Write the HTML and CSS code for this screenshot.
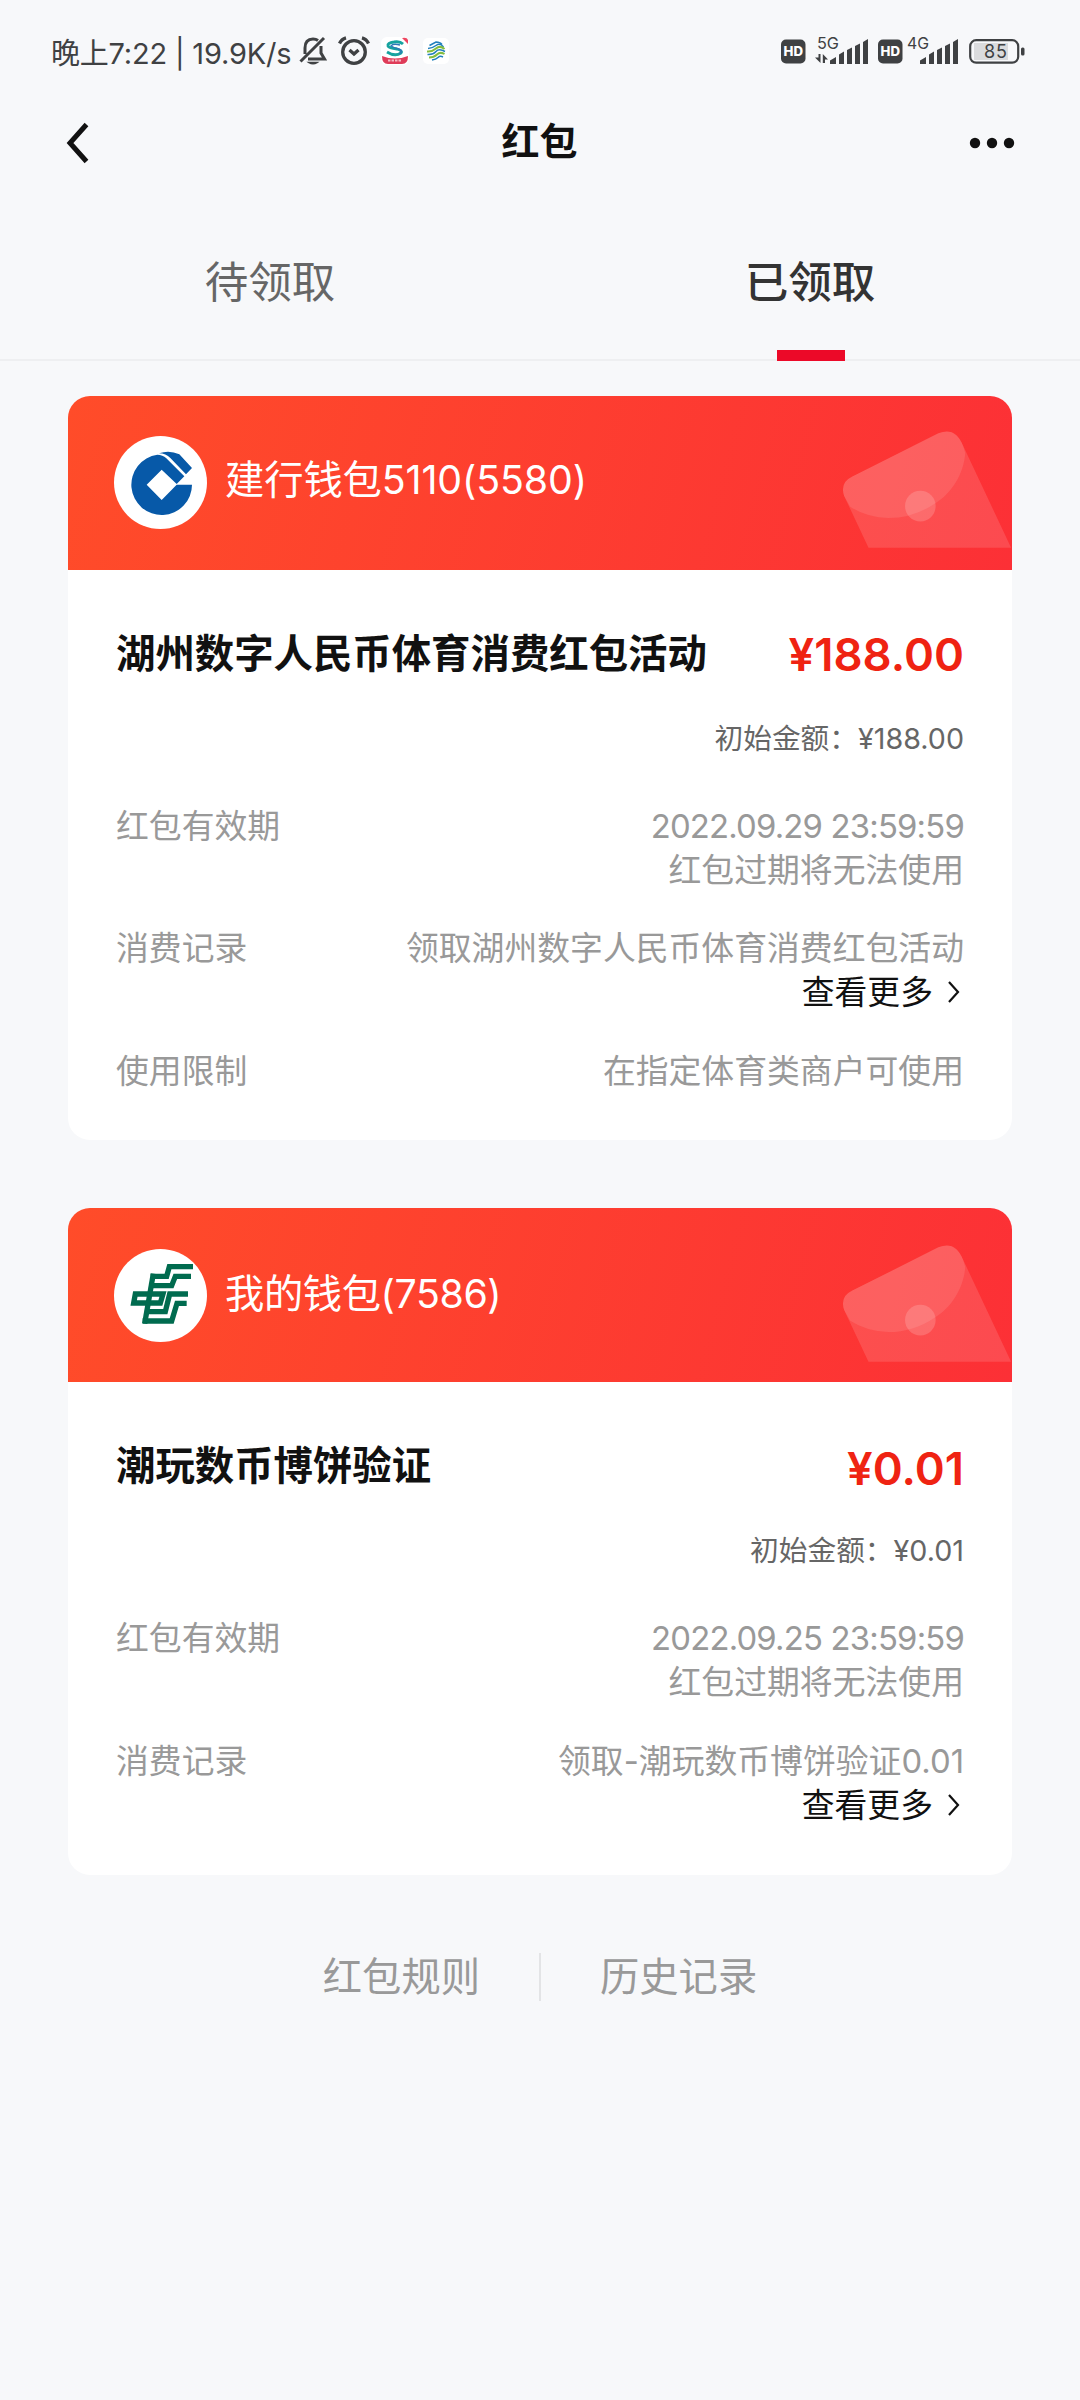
FILE: index.html
```html
<!DOCTYPE html>
<html lang="zh-CN">
<head>
<meta charset="utf-8">
<title>红包</title>
<link rel="stylesheet" href="styles.css">
</head>
<body>
<svg class="defs" width="0" height="0" aria-hidden="true">
  <symbol id="envelope" viewBox="120 110 516 370">
    <path d="M205 473 132 318Q118 278 155 260L415 129Q466 108 489 165L634 473Z" fill="#fff" fill-opacity=".13"/>
    <path d="M150 350 132 318Q118 278 155 260L415 129Q466 108 489 165L496 188C492 250 455 310 405 340Q340 384 265 384 200 382 150 350Z" fill="#fff" fill-opacity=".1"/>
    <circle cx="361" cy="348" r="46" fill="#fff" fill-opacity=".17"/>
  </symbol>
  <symbol id="chevron" viewBox="0 0 14 24"><path d="M2 2 11 12 2 22" fill="none" stroke="#111" stroke-width="2.200"/></symbol>
</svg>

<header class="status">
  <div class="status-left">
    <span class="clock">晚上7:22 | 19.9K/s</span>
    <svg class="i-bell" width="28" height="30" viewBox="0 0 28 30" fill="none" stroke="#3f4143" stroke-width="3">
      <path d="M1.500 25.500 25 2M6 18V12Q6 3 14 3 17 3 19 4.500M22 10V17L25.500 23H9"/><path d="M10 26.500Q14 29 18 26.500Z" fill="#3f4143" stroke-width="1.500"/>
    </svg>
    <svg class="i-alarm" width="32" height="30" viewBox="0 0 32 30" fill="none" stroke="#3f4143" stroke-width="3.300">
      <circle cx="16" cy="16" r="11.300"/><path d="M1.500 7.500Q3.500 3 8 1.800M30.500 7.500Q28.500 3 24 1.800M11.500 14 16 18 20.500 14"/>
    </svg>
    <svg class="i-app" width="28" height="28" viewBox="0 0 28 28">
      <rect width="28" height="28" rx="6" fill="#fff"/>
      <path d="M22 7Q19 4 13 5 6 6 7 9 8 11 16 12 22 14 20 16 14 20 6 15" fill="none" stroke="#16a39f" stroke-width="2.800"/>
      <path d="M19 8Q12 6 10 9 13 11 18 12 23 14 18 17" fill="none" stroke="#2f78b8" stroke-width="1.400"/>
      <path d="M21 1 27 7V3Q26 0 21 1Z" fill="#ee4560"/>
      <path d="M1 19Q14 24 27 19 27 27 21 27H7Q1 27 1 19Z" fill="#df3c59"/>
      <path d="M7 23.500H21" stroke="#fff" stroke-width="2" stroke-dasharray="2.500 1" opacity=".65"/>
    </svg>
    <svg class="i-app2" width="26" height="26" viewBox="0 0 26 26">
      <rect width="26" height="26" rx="5" fill="#fff"/>
      <g fill="none" stroke-width="1.500" stroke="#2180bd"><path d="M6.500 7.500 13 4Q17 4 19 6.500"/><path d="M5 10.500Q9 10.500 13 7.500T20.500 9"/><path d="M4 13.500Q9 14 13 10.500T21.500 11" stroke="#83bd3f" stroke-width="2"/><path d="M4.500 16.500Q10 17 13 13.500T22 13.500"/><path d="M6 19.500Q11 19.500 14 16.500T21.500 16" stroke="#83bd3f" stroke-width="2"/><path d="M9 22Q13 21.500 15 19.500T20 19"/></g>
    </svg>
  </div>
  <svg class="status-right" width="246" height="34" viewBox="780 34 246 34">
    <g fill="#3f4143">
      <rect x="781" y="39.500" width="24.500" height="24" rx="5"/>
      <rect x="878" y="39.500" width="24.500" height="24" rx="5"/>
      <path d="M830 64V60.500L836 57V64ZM839 64V54.500L844 51.500V64ZM847 64V50L852 47.500V64ZM855 64V46L860 43.500V64ZM863 64V42L868 39V64Z"/>
      <path d="M920 64V60.500L926 57V64ZM929 64V54.500L934 51.500V64ZM937 64V50L942 47.500V64ZM945 64V46L950 43.500V64ZM953 64V42L958 39V64Z"/>
      <path d="M820.500 54V63L815 57.500H818.500V54ZM822.800 63V54L828 59.500H825V63Z"/>
      <rect x="1021" y="47.500" width="3.500" height="8" rx="1.500"/>
    </g>
    <g fill="#fff" class="hd"><text x="783.600" y="56" textLength="19.500" lengthAdjust="spacingAndGlyphs">HD</text><text x="880.600" y="56" textLength="19.500" lengthAdjust="spacingAndGlyphs">HD</text></g>
    <g fill="#3f4143" class="net"><text x="817" y="48.800" textLength="22" lengthAdjust="spacingAndGlyphs">5G</text><text x="907" y="48.800" textLength="22" lengthAdjust="spacingAndGlyphs">4G</text></g>
    <rect x="974" y="43" width="34" height="17" fill="#dadbdd"/>
    <rect x="970.200" y="40.200" width="48" height="22.500" rx="6" fill="none" stroke="#3f4143" stroke-width="2.200"/>
    <text class="batt" x="984" y="58" fill="#3f4143" textLength="23">85</text>
  </svg>
</header>

<nav class="nav">
  <svg width="26" height="42" viewBox="0 0 26 42"><path d="M22.500 2.500 6 21 22.500 39.500" fill="none" stroke="#111" stroke-width="5"/></svg>
  <h1>红包</h1>
  <svg width="46" height="12" viewBox="0 0 46 12" fill="#111"><circle cx="6" cy="6" r="5.200"/><circle cx="23" cy="6" r="5.200"/><circle cx="40" cy="6" r="5.200"/></svg>
</nav>

<div class="tabs">
  <div class="tab">待领取</div>
  <div class="tab active">已领取</div>
</div>

<main>
  <section class="card">
    <div class="head">
      <svg class="logo" width="93" height="93" viewBox="42 46 279 279">
        <circle cx="181.500" cy="185.500" r="139.500" fill="#fff"/>
        <g fill="#0759a8"><path d="M276 192A91 91 0 1 1 172 102Q188 102 199 113L253 167 230 190 185 147 140 192 185 238 230 192Z"/><path d="M177 98Q208 87 238 101L276 142 258 161 211 112Q198 98 177 98Z"/></g>
      </svg>
      <span class="wallet">建行钱包5110(5580)</span>
      <svg class="env" width="172" height="123"><use href="#envelope"/></svg>
    </div>
    <div class="body">
      <div class="title"><h2>湖州数字人民币体育消费红包活动</h2><strong>¥188.00</strong></div>
      <div class="initial">初始金额：¥188.00</div>
      <dl>
        <dt>红包有效期</dt><dd><span class="date">2022.09.29 23:59:59</span><br>红包过期将无法使用</dd>
        <dt>消费记录</dt><dd>领取湖州数字人民币体育消费红包活动<a class="more">查看更多<svg width="14" height="24"><use href="#chevron"/></svg></a></dd>
        <dt>使用限制</dt><dd>在指定体育类商户可使用</dd>
      </dl>
    </div>
  </section>

  <section class="card second">
    <div class="head">
      <svg class="logo" width="93" height="93" viewBox="42 57 279 279">
        <circle cx="181.500" cy="196.500" r="139.500" fill="#fff"/>
        <g fill="none" stroke="#006b4f" stroke-width="16">
          <path d="M279 110H208L200 139H152"/><path d="M273 139H226L215 167H148"/>
          <path d="M160 131 134 281"/>
          <path d="M264 192H209L196 245H138"/><path d="M260 220H231L215 273H128"/><path d="M144 219H101L106 192H189L181 219H144"/>
        </g>
      </svg>
      <span class="wallet">我的钱包(7586)</span>
      <svg class="env" width="172" height="123"><use href="#envelope"/></svg>
    </div>
    <div class="body">
      <div class="title"><h2>潮玩数币博饼验证</h2><strong>¥0.01</strong></div>
      <div class="initial">初始金额：¥0.01</div>
      <dl>
        <dt>红包有效期</dt><dd><span class="date">2022.09.25 23:59:59</span><br>红包过期将无法使用</dd>
        <dt>消费记录</dt><dd>领取-潮玩数币博饼验证0.01<a class="more">查看更多<svg width="14" height="24"><use href="#chevron"/></svg></a></dd>
      </dl>
    </div>
  </section>
</main>

<footer><a>红包规则</a><i></i><a>历史记录</a></footer>
</body>
</html>
```
FILE: styles.css
```css
* { box-sizing: border-box; margin: 0; padding: 0; }
body { width: 1080px; min-height: 2400px; background: #f7f8fa; color: #111; font-family: Inter, "Noto Sans CJK SC", sans-serif; }
.defs { display: block; position: absolute; }

.status { display: flex; justify-content: space-between; height: 103px; padding: 0 54px 0 51px; }
.status-left { display: flex; height: 102px; align-items: center; }
.clock { width: 248px; margin-top: -1px; font-size: 29px; letter-spacing: -.2px; color: #3f4143; white-space: nowrap; }
.i-bell { margin-right: 11px; }
.i-alarm { margin-right: 11px; }
.i-app { margin-right: 14px; }
.status-right { margin-top: 34px; }
.hd { font-size: 13px; font-weight: 800; }
.net { font-size: 16px; }
.batt { font-size: 18px; }

.nav { display: flex; justify-content: space-between; align-items: center; height: 80px; padding: 0 65px 0 64px; }
.nav h1 { margin-top: -4px; padding-left: 20px; font-size: 38px; line-height: 50px; font-weight: 700; }

.tabs { display: flex; height: 178px; border-bottom: 2px solid #eeeff1; }
.tab { flex: 1; display: flex; justify-content: center; padding-top: 69px; font-size: 43.5px; line-height: 60px; color: #666; }
.active { position: relative; color: #333; font-weight: 500; }
.active::after { content: ""; position: absolute; left: 237px; top: 167px; width: 68px; height: 11px; background: #ec0928; }

main { padding: 35px 68px 0; }
.card { border-radius: 22px; overflow: hidden; background: #fff; }
.second { margin-top: 68px; }
.head { position: relative; display: flex; align-items: center; height: 174px; padding: 0 0 0 46px; background: linear-gradient(105deg, #ff4c29, #fc3036); }
.logo { margin-bottom: 2px; }
.second .logo { margin-bottom: 0; }
.wallet { margin: 0 0 6px 18px; color: #fff; font-size: 39.3px; line-height: 50px; letter-spacing: -.1px; white-space: nowrap; }
.second .wallet { margin-bottom: 3px; letter-spacing: -.4px; }
.env { position: absolute; right: 0; top: 31px; }
.second .env { top: 33px; }
.body { padding: 56px 48px 47px; }
.second .body { padding-bottom: 48px; }
.title { display: flex; justify-content: space-between; height: 56px; line-height: 56px; white-space: nowrap; }
.title h2 { font-size: 39.4px; font-weight: 700; }
.title strong { padding-top: 1px; font-size: 45.5px; font-weight: 600; color: #ef2312; }
.second strong { padding-top: 3px; }
.initial { margin-top: 37px; height: 40px; text-align: right; font-size: 28.7px; line-height: 40px; color: #666; }
dl { display: grid; grid-template-columns: auto 1fr; row-gap: 34px; margin-top: 45px; font-size: 32.85px; line-height: 44px; color: #999; }
dt:nth-of-type(3), dt:nth-of-type(3) + dd { margin-top: 1px; }
.second dl { row-gap: 35px; }
dd { text-align: right; white-space: nowrap; }
.more { display: flex; justify-content: flex-end; align-items: center; gap: 14px; color: #111; }
.more svg { margin-right: 3px; }
.date { letter-spacing: -.8px; }

footer { display: flex; justify-content: center; align-items: center; height: 48px; margin-top: 78px; font-size: 39.3px; line-height: 48px; color: #999; }
footer i { width: 2px; height: 48px; margin: 0 59px; background: #e3e4e6; }
```
